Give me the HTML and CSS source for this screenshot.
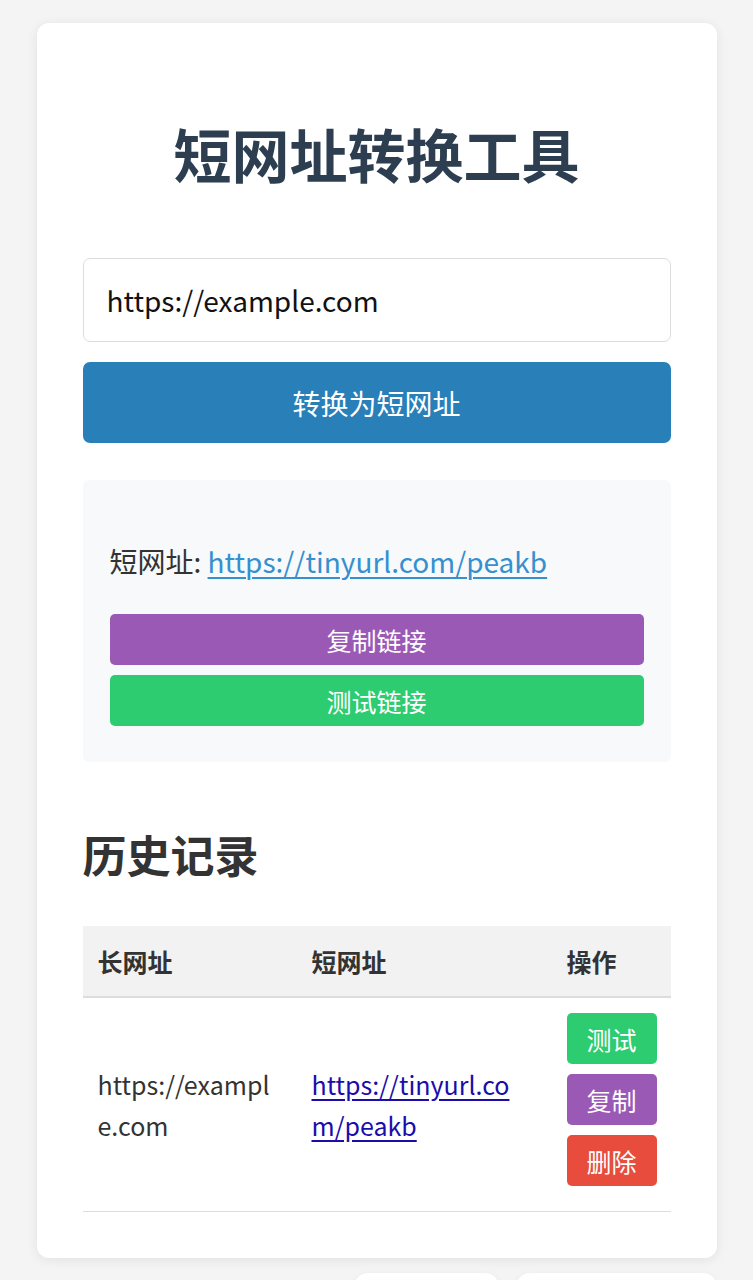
FILE: index.html
```html
<!DOCTYPE html>
<html lang="zh-CN">
<head>
<meta charset="utf-8">
<title>短网址转换工具</title>
<link rel="stylesheet" href="styles.css">
</head>
<body>
<div class="card">
  <h1 class="title">短网址转换工具</h1>
  <input class="url-input" type="text" value="https://example.com">
  <button class="btn btn-primary">转换为短网址</button>
  <div class="result">
    <p class="result-line">短网址: <a class="result-link" href="#">https://tinyurl.com/peakb</a></p>
    <button class="btn btn-wide btn-purple">复制链接</button>
    <button class="btn btn-wide btn-green">测试链接</button>
  </div>
  <h2 class="section-title">历史记录</h2>
  <table class="history">
    <colgroup>
      <col class="col-long">
      <col class="col-short">
      <col class="col-ops">
    </colgroup>
    <thead>
      <tr><th>长网址</th><th>短网址</th><th>操作</th></tr>
    </thead>
    <tbody>
      <tr>
        <td class="long-cell">https://example.com</td>
        <td class="short-cell"><a href="#">https://tinyurl.com/peakb</a></td>
        <td class="ops-cell">
          <button class="btn btn-small btn-green">测试</button>
          <button class="btn btn-small btn-purple">复制</button>
          <button class="btn btn-small btn-red">删除</button>
        </td>
      </tr>
    </tbody>
  </table>
</div>
<div class="toasts">
  <div class="toast toast-a"></div>
  <div class="toast toast-b"></div>
</div>
</body>
</html>
```
FILE: styles.css
```css
* { box-sizing: border-box; }
html, body { margin: 0; padding: 0; }
body {
  background: #f4f4f4;
  font-family: "Noto Sans CJK SC", "Noto Sans", sans-serif;
  color: #333;
  overflow: hidden;
  height: 1280px;
}
.card {
  width: 680px;
  margin: 23px auto 0;
  background: #fff;
  border-radius: 12px;
  box-shadow: 0 2px 12px rgba(0,0,0,0.08);
  padding: 46px;
}
.title {
  margin: 49px 0 70px;
  font-size: 58px;
  line-height: 70px;
  font-weight: 700;
  text-align: center;
  color: #2c3e50;
}
.url-input {
  display: block;
  width: 100%;
  height: 84px;
  border: 1.5px solid #ddd;
  border-radius: 7px;
  padding: 0 23px;
  font-family: "Noto Sans CJK SC", sans-serif;
  font-size: 28px;
  color: #111;
  outline: none;
  margin: 0;
}
.btn {
  display: block;
  border: none;
  color: #fff;
  font-family: "Noto Sans CJK SC", sans-serif;
  cursor: pointer;
  padding: 0;
}
.btn-primary {
  width: 100%;
  height: 81px;
  margin-top: 20px;
  background: #2980b9;
  border-radius: 7px;
  font-size: 28px;
}
.result {
  margin-top: 37px;
  background: #f8f9fa;
  border-radius: 6px;
  padding: 36px 27px;
}
.result-line {
  margin: 24px 0 32px;
  font-size: 28px;
  line-height: 42px;
  color: #333;
}
.result-link {
  color: #3490cf;
  text-decoration: underline;
  text-decoration-thickness: 1.5px;
  text-underline-offset: 4px;
}
.btn-wide {
  width: 100%;
  height: 51px;
  border-radius: 5px;
  font-size: 25px;
}
.btn-wide + .btn-wide { margin-top: 10px; }
.btn-purple { background: #9b59b6; }
.btn-green { background: #2ecc71; }
.btn-red { background: #e74c3c; }
.section-title {
  margin: 67px 0 46px;
  font-size: 44px;
  line-height: 51px;
  font-weight: 700;
  color: #333;
}
.history {
  width: 100%;
  border-collapse: collapse;
  table-layout: fixed;
}
.col-long { width: 214px; }
.col-short { width: 255px; }
.col-ops { width: 119px; }
.history th {
  background: #f2f2f2;
  text-align: left;
  font-size: 25px;
  font-weight: 700;
  color: #333;
  height: 71px;
  padding: 0 15px;
  border-bottom: 2px solid #ddd;
}
.history td {
  padding: 15px;
  font-size: 25px;
  line-height: 41px;
  border-bottom: 1.5px solid #ddd;
  vertical-align: middle;
  word-break: break-all;
}
.long-cell { color: #333; }
.short-cell a {
  color: #1a0dab;
  text-decoration: underline;
  text-underline-offset: 4px;
}
.ops-cell { padding-bottom: 15px; }
.btn-small {
  width: 90px;
  height: 51px;
  border-radius: 5px;
  font-size: 25px;
  margin-bottom: 10px;
}
.toasts {
  display: flex;
  justify-content: flex-end;
  gap: 17px;
  width: 680px;
  margin: 15px auto 0;
}
.toast {
  height: 44px;
  background: #fff;
  border-radius: 14px;
  box-shadow: 0 1px 6px rgba(0,0,0,0.05);
}
.toast-a { width: 145px; }
.toast-b { width: 201px; }
```
